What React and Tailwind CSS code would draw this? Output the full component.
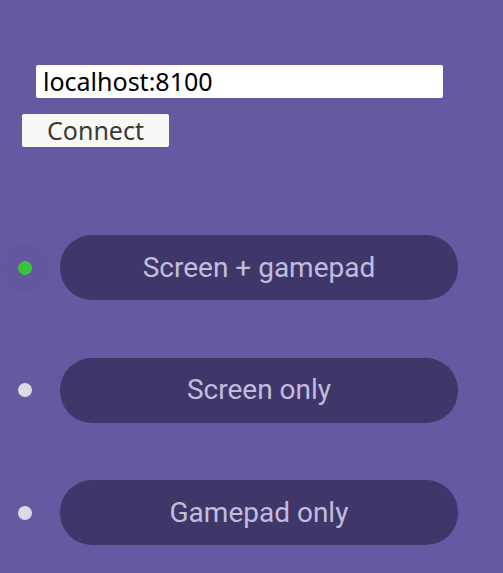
const modes = [
  { label: 'Screen + gamepad', active: true },
  { label: 'Screen only', active: false },
  { label: 'Gamepad only', active: false },
];

export default function App() {
  return (
    <div className="w-[503px] h-[573px] bg-[#6659a1] overflow-hidden flex flex-col">
      {/* Connection form */}
      <div className="pt-[65px] pl-[36px]">
        <div className="w-[407px] h-[33px] bg-white rounded-[2px] flex items-center pl-[7px] font-['Noto_Sans',sans-serif] text-[25px] text-black leading-none">
          localhost:8100
        </div>
      </div>
      <div className="pt-[16px] pl-[22px]">
        <button className="w-[147px] h-[33px] bg-[#f8f8f6] rounded-[2px] flex items-center justify-center font-['Noto_Sans',sans-serif] text-[25px] text-[#3a3a36] leading-none">
          Connect
        </button>
      </div>

      {/* Mode list */}
      <div className="mt-[88px] flex flex-col gap-[57.5px]">
        {modes.map((m) => (
          <div key={m.label} className="flex items-center">
            <div className="w-[60px] flex justify-center pr-[10px]">
              <div className="relative w-[48px] h-[48px] flex items-center justify-center">
                {m.active && (
                  <span className="absolute inset-0 rounded-full bg-[#6457a0]" />
                )}
                <span
                  className={
                    m.active
                      ? 'relative w-[14px] h-[14px] rounded-full bg-[#36c43a]'
                      : 'relative w-[14px] h-[14px] rounded-full bg-[#dcdae4]'
                  }
                />
              </div>
            </div>
            <button className="w-[398px] h-[65px] rounded-[32px] bg-[#3f3769] flex items-center justify-center font-['Roboto',sans-serif] text-[28px] text-[#c4bcdf]">
              {m.label}
            </button>
          </div>
        ))}
      </div>
    </div>
  );
}
